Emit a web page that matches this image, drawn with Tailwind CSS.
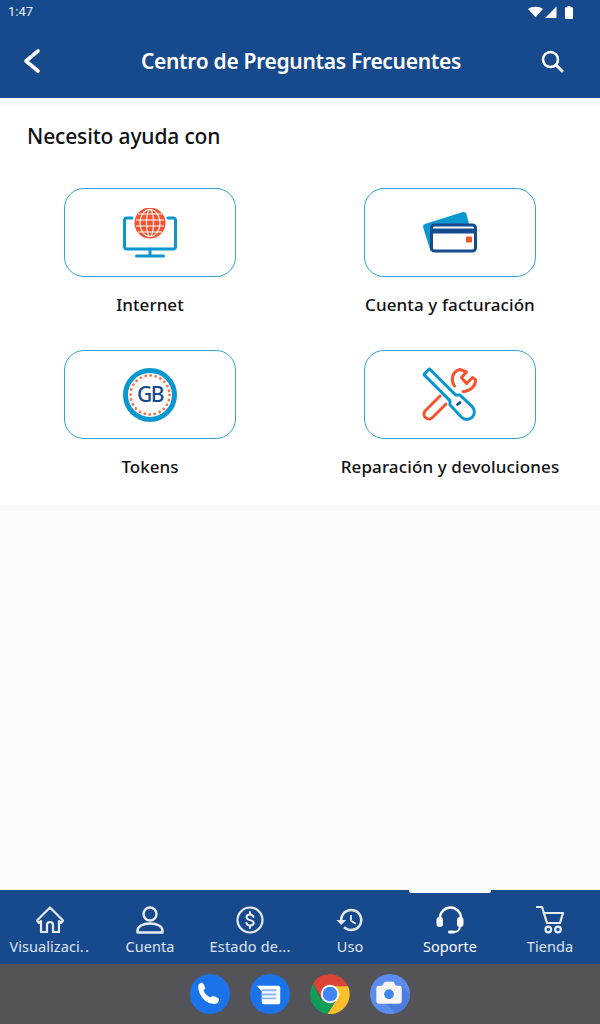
<!DOCTYPE html>
<html>
<head>
<meta charset="utf-8">
<script src="https://cdn.jsdelivr.net/npm/@tailwindcss/browser@4"></script>
</head>
<body class="m-0">
<div class="w-[600px] h-[1024px] flex flex-col bg-[#fafafa] overflow-hidden font-['Noto_Sans',sans-serif]">
  <!-- status + header -->
  <div class="h-[98px] bg-[#174a8c] text-white flex flex-col shrink-0">
    <div class="h-6 flex items-center justify-between pl-2 pr-[27px]">
      <span class="text-[13px] text-white/90 font-['Roboto',sans-serif]">1:47</span>
      <div class="flex items-center gap-[2px]">
        <svg width="15" height="12" viewBox="0 0 17 12"><path d="M0 2.500C2.300 0.800 5.200 0 8.500 0s6.200.8 8.500 2.500L8.500 12z" fill="#fff"/></svg>
        <svg width="12" height="12" viewBox="0 0 12 12"><path d="M11.500 0.500V12H0z" fill="#fff"/></svg>
        <svg width="8" height="13" viewBox="0 0 8 13" class="ml-[6px]"><path d="M2.500 0h3v1.200H7a1 1 0 0 1 1 1V12a1 1 0 0 1-1 1H1a1 1 0 0 1-1-1V2.200a1 1 0 0 1 1-1h1.500z" fill="#fff"/></svg>
      </div>
    </div>
    <div class="flex-1 flex items-center justify-between pl-[21px] pr-[36px]">
      <svg width="24" height="28" viewBox="0 0 24 28"><path d="M17 4L5 14l12 10" fill="none" stroke="#fff" stroke-width="3.600" stroke-linecap="round" stroke-linejoin="round"/></svg>
      <span class="text-[21px] font-semibold leading-none tracking-[-0.3px] ml-[17px]">Centro de Preguntas Frecuentes</span>
      <svg width="24" height="24" viewBox="0 0 24 24"><circle cx="10.500" cy="10.500" r="7.500" fill="none" stroke="#fff" stroke-width="2.600"/><path d="M16 16l6 6" stroke="#fff" stroke-width="3" stroke-linecap="round"/></svg>
    </div>
  </div>
  <!-- content -->
  <div class="h-[399px] mt-[8px] bg-white shrink-0 pt-[16px]">
    <h1 class="pl-[27px] text-[21px] font-medium text-[#111] leading-[28px] tracking-[-0.15px]">Necesito ayuda con</h1>
    <div class="grid grid-cols-2 mt-[38px] gap-y-[33px]">
      <div class="flex flex-col items-center">
        <div class="w-[172px] h-[89px] rounded-[20px] border border-[#2fa3d6] flex items-center justify-center">
          <svg width="56" height="50" viewBox="0 0 56 50">
            <path d="M10 10H5a2.500 2.500 0 0 0-2.500 2.500V38.500A2.500 2.500 0 0 0 5 41h46a2.500 2.500 0 0 0 2.500-2.500V12.500A2.500 2.500 0 0 0 51 10h-5" fill="none" stroke="#0a96cf" stroke-width="3" stroke-linecap="round"/>
            <path d="M28 41v7M14.500 48h27" stroke="#0a96cf" stroke-width="3" stroke-linecap="round"/>
            <circle cx="28" cy="15" r="15.500" fill="#f4532f"/>
            <g fill="none" stroke="#fff" stroke-width="1.100">
              <ellipse cx="28" cy="15" rx="10" ry="13.500"/>
              <ellipse cx="28" cy="15" rx="3.500" ry="13.500"/>
              <path d="M16 6h24M14 12h28M14 18h28M16 24h24"/>
            </g>
          </svg>
        </div>
        <span class="mt-[16px] text-[17px] font-medium leading-[24px] text-[#111] tracking-[0.05px]">Internet</span>
      </div>
      <div class="flex flex-col items-center">
        <div class="w-[172px] h-[89px] rounded-[20px] border border-[#2fa3d6] flex items-center justify-center">
          <svg width="56" height="44" viewBox="0 0 56 44">
            <path d="M3 13L41 1a3 3 0 0 1 3.500 2L47 13H12V40H8.500L1 16a3 3 0 0 1 2-3z" fill="#0a96cf"/>
            <rect x="9.500" y="14" width="44" height="26" rx="3" fill="#fff" stroke="#174a8c" stroke-width="3"/>
            <rect x="9.500" y="17.500" width="44" height="5" fill="#174a8c"/>
            <rect x="44" y="25.500" width="6" height="6" rx="1" fill="#f4532f"/>
          </svg>
        </div>
        <span class="mt-[16px] text-[17px] font-medium leading-[24px] text-[#111] tracking-[0.1px]">Cuenta y facturación</span>
      </div>
      <div class="flex flex-col items-center">
        <div class="w-[172px] h-[89px] rounded-[20px] border border-[#2fa3d6] flex items-center justify-center">
          <div class="relative w-[54px] h-[54px] flex items-center justify-center">
            <svg width="54" height="54" viewBox="0 0 54 54" class="absolute inset-0">
              <circle cx="27" cy="27" r="24.500" fill="none" stroke="#0a96cf" stroke-width="5"/>
              <circle cx="27" cy="27" r="19.500" fill="none" stroke="#f4764f" stroke-width="2.800" stroke-linecap="round" stroke-dasharray="0.100 5.005"/>
            </svg>
            <span class="relative text-[21px] font-medium text-[#174a8c] leading-none tracking-[-1.5px]">GB</span>
          </div>
        </div>
        <span class="mt-[16px] text-[17px] font-medium leading-[24px] text-[#111] tracking-[0.05px]">Tokens</span>
      </div>
      <div class="flex flex-col items-center">
        <div class="w-[172px] h-[89px] rounded-[20px] border border-[#2fa3d6] flex items-center justify-center">
          <svg width="56" height="56" viewBox="0 0 56 56">
            <path d="M18 29L3 44a5 5 0 0 0 7 7L24 37" fill="none" stroke="#f4532f" stroke-width="3" stroke-linecap="round" stroke-linejoin="round"/>
            <path d="M32.500 19C28 12 31 4 38 2.500L44.500 5L39.500 10.500L44.500 16.500L50.500 10.500L53.500 12.500C54 19 48 24.500 41 24.500" fill="none" stroke="#f4532f" stroke-width="3" stroke-linecap="round" stroke-linejoin="round"/>
            <g transform="translate(6 6) rotate(45)">
              <path d="M-1 -4H35L38 -7L55 -7.500a7.500 7.500 0 0 1 0 15L38 7L35 4H-1a1 1 0 0 1-1-1v-6a1 1 0 0 1 1-1z" fill="none" stroke="#0a96cf" stroke-width="3" stroke-linejoin="round"/>
            </g>
            <path d="M35.500 37.500L38 35.500" stroke="#174a8c" stroke-width="2.800" stroke-linecap="round"/>
          </svg>
        </div>
        <span class="mt-[16px] text-[17px] font-medium leading-[24px] text-[#111] tracking-[0.12px]">Reparación y devoluciones</span>
      </div>
    </div>
  </div>
  <div class="flex-1"></div>
  <!-- bottom nav -->
  <div class="h-[74px] bg-[#174a8c] shrink-0 grid grid-cols-6 text-[14.500px] leading-[20px] tracking-[0.05px] text-white/85">
    <div class="flex flex-col items-center pt-[16px]">
      <svg width="30" height="28" viewBox="0 0 30 28" fill="none" stroke="#e8ecf2" stroke-width="2.200" stroke-linejoin="round" stroke-linecap="round"><path d="M15 1.500 2 14.500l2 2.500 2-2V26h6v-7a3 3 0 0 1 6 0v7h6V15l2 2 2-2.500z"/></svg>
      <span class="mt-[2px] whitespace-nowrap">Visualizaci<span class="tracking-[1.500px]">..</span></span>
    </div>
    <div class="flex flex-col items-center pt-[16px]">
      <svg width="28" height="28" viewBox="0 0 28 28" fill="none" stroke="#e8ecf2" stroke-width="2.400"><circle cx="14" cy="8" r="6.500"/><path d="M1.500 26.500v-1.500c0-4.500 5-7.500 12.500-7.500s12.500 3 12.500 7.500v1.500z" stroke-linejoin="round"/></svg>
      <span class="mt-[2px]">Cuenta</span>
    </div>
    <div class="flex flex-col items-center pt-[16px]">
      <svg width="28" height="28" viewBox="0 0 28 28" fill="none" stroke="#e8ecf2" stroke-width="2.200"><circle cx="14" cy="14" r="12.500"/><path d="M17.500 11c-.4-1.600-1.800-2.500-3.500-2.500s-3.500 1-3.500 2.700c0 3.800 7.200 2 7.200 5.600 0 1.800-1.700 2.700-3.700 2.700s-3.300-1-3.700-2.700M14 6v2.500M14 19.500v2.500" stroke-width="2" stroke-linecap="round"/></svg>
      <span class="mt-[2px] tracking-[0.2px]">Estado de...</span>
    </div>
    <div class="flex flex-col items-center pt-[16px]">
      <svg width="30" height="30" viewBox="0 0 24 24" class="-my-[1px]" fill="#e8ecf2"><path d="M13 3a9 9 0 0 0-9 9H1l3.890 3.890.07.14L9 12H6c0-3.870 3.130-7 7-7s7 3.130 7 7-3.130 7-7 7c-1.930 0-3.680-.79-4.940-2.060l-1.420 1.420A8.954 8.954 0 0 0 13 21a9 9 0 0 0 0-18zm-1 5v5l4.280 2.540.72-1.210-3.500-2.080V8H12z"/></svg>
      <span class="mt-[2px]">Uso</span>
    </div>
    <div class="relative flex flex-col items-center pt-[16px] text-white">
      <div class="absolute top-0 w-[82px] h-[3px] bg-white rounded-b-[2px]"></div>
      <svg width="28" height="28" viewBox="0 0 28 28" fill="none"><path d="M4 14V12a10.500 10.500 0 0 1 21 0v2" stroke="#fff" stroke-width="2.400"/><rect x="0.500" y="11" width="6.500" height="10" rx="3.200" fill="#fff"/><rect x="21" y="11" width="6.500" height="10" rx="3.200" fill="#fff"/><path d="M24 20c0 4-3 6-6 6" stroke="#fff" stroke-width="2"/><rect x="12" y="24.500" width="7" height="3" rx="1.500" fill="#fff"/></svg>
      <span class="mt-[2px]">Soporte</span>
    </div>
    <div class="flex flex-col items-center pt-[16px]">
      <svg width="28" height="28" viewBox="0 0 28 28" fill="none" stroke="#e8ecf2" stroke-width="2.200" stroke-linecap="round" stroke-linejoin="round"><path d="M1 1h5l5 16h13l3-10H7.500"/><circle cx="12.300" cy="23.500" r="2.800"/><circle cx="22" cy="23.500" r="2.800"/></svg>
      <span class="mt-[2px]">Tienda</span>
    </div>
  </div>
  <!-- system bar -->
  <div class="h-[60px] bg-[#545358] shrink-0 flex items-center justify-center gap-[20px] pb-[1px]">
    <svg width="40" height="40" viewBox="0 0 41 41"><circle cx="20.500" cy="20.500" r="20.500" fill="#1a73e8"/><path d="M8.500 12c.5-2 2.500-3.500 4-3 1.200.5 2.500 3.500 3 5.200.2.900-.5 1.800-1.700 2.800 1.400 3.200 4.300 6 7.200 7.200 1-1.200 2-2 3-1.700 1.700.5 4.500 1.800 5.500 2.800.5.600.5 2.200-.6 3.700-1.100 1.500-3.200 2-5.400 1.400C14.500 30.500 7.800 19 8.500 12z" fill="#fff"/></svg>
    <svg width="40" height="40" viewBox="0 0 41 41"><circle cx="20.500" cy="20.500" r="20.500" fill="#1a73e8"/><path d="M7 12H29a2 2 0 0 1 2 2V29a2 2 0 0 1-2 2H14a2 2 0 0 1-2-2V18z" fill="#fff"/><path d="M12 16.700h15M12 21h15M12 25h15" stroke="#8ab4f8" stroke-width="2"/></svg>
    <svg width="40" height="40" viewBox="0 0 41 41">
      <path d="M20.500 0A20.500 20.500 0 0 0 3 10l8.500 14 9-11.500H39A20.500 20.500 0 0 0 20.500 0z" fill="#db4437"/>
      <path d="M3 10A20.500 20.500 0 0 0 18 41l7-12-14-3z" fill="#0f9d58"/>
      <path d="M39 12.500H20.500L28 25 18 41a20.500 20.500 0 0 0 21-28.500z" fill="#fbc02d"/>
      <circle cx="20.500" cy="20.500" r="9.500" fill="#fff"/><circle cx="20.500" cy="20.500" r="7.500" fill="#4285f4"/>
    </svg>
    <svg width="40" height="40" viewBox="0 0 41 41"><circle cx="20.500" cy="20.500" r="20.500" fill="#5b8def"/><path d="M32 12L41 21A20.500 20.500 0 0 1 26 40L16 30z" fill="#4a7ddf"/><path d="M9 12h3.500L15 8h9l2.500 4H30a2.500 2.500 0 0 1 2.500 2.500V28a2.500 2.500 0 0 1-2.500 2.500H9A2.500 2.500 0 0 1 6.500 28V14.500A2.500 2.500 0 0 1 9 12z" fill="#f5f5f5"/><circle cx="19.500" cy="20.700" r="6.500" fill="#fff"/><circle cx="19.500" cy="20.700" r="5" fill="#4285f4"/></svg>
  </div>
</div>
</body>
</html>
